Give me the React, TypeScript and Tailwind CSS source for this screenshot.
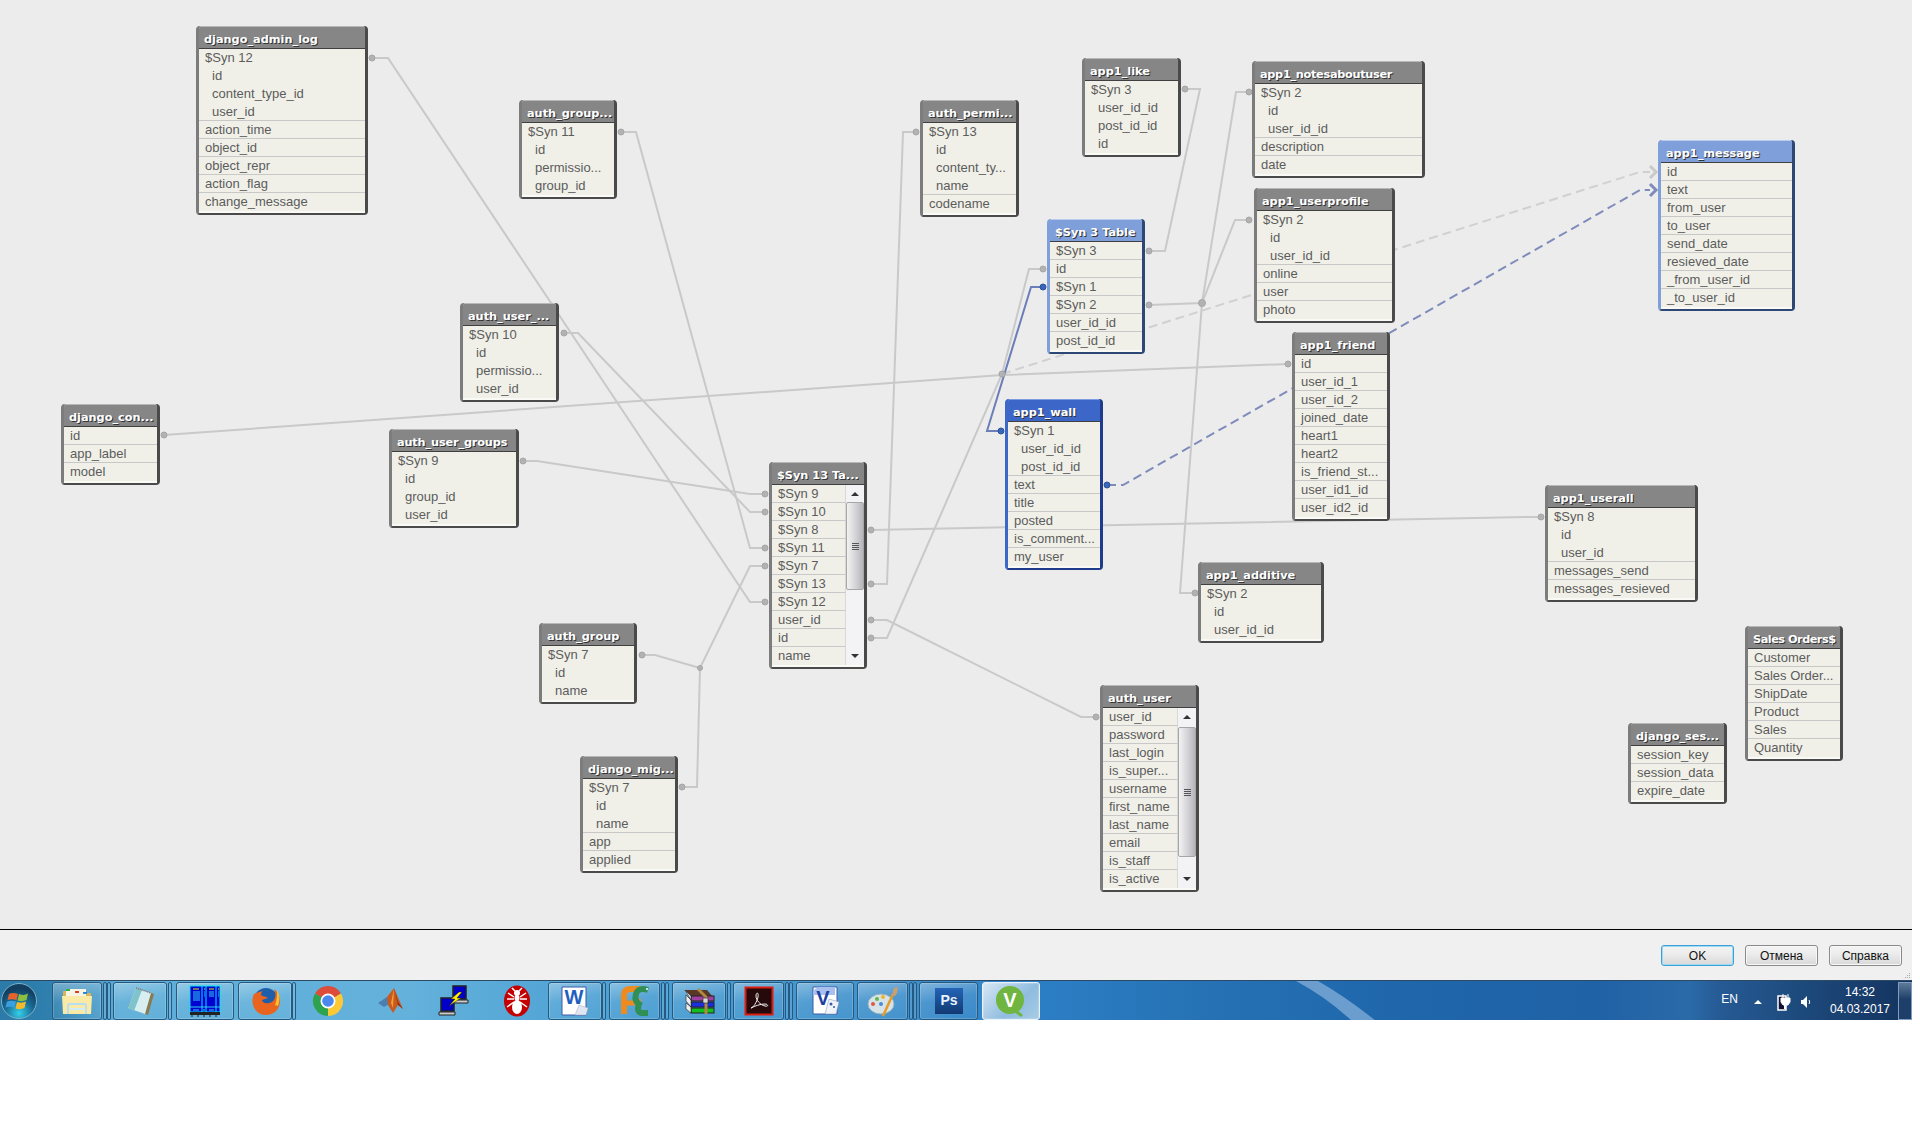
import React from "react";

type Tone = "gray" | "blue" | "light";

type TableData = {
  name: string;
  x: string;
  w: string;
  rows: string[];
  scroll?: string;
  tone?: Tone;
  head?: string;
};

// indented rows start with two spaces
const tables: TableData[] = [
  { name: "django_admin_log", x: "left-[196px] top-[26px]", w: "w-[172px]", rows: ["$Syn 12", "  id", "  content_type_id", "  user_id", "action_time", "object_id", "object_repr", "action_flag", "change_message"] },
  { name: "auth_group...", x: "left-[519px] top-[100px]", w: "w-[98px]", rows: ["$Syn 11", "  id", "  permissio...", "  group_id"] },
  { name: "auth_user_...", x: "left-[460px] top-[303px]", w: "w-[99px]", rows: ["$Syn 10", "  id", "  permissio...", "  user_id"] },
  { name: "django_con...", x: "left-[61px] top-[404px]", w: "w-[99px]", rows: ["id", "app_label", "model"] },
  { name: "auth_user_groups", x: "left-[389px] top-[429px]", w: "w-[130px]", head: "tracking-[-0.15px]", rows: ["$Syn 9", "  id", "  group_id", "  user_id"] },
  { name: "$Syn 13 Ta...", x: "left-[769px] top-[462px]", w: "w-[98px]", scroll: "mt-[-1px] h-[88px]", rows: ["$Syn 9", "$Syn 10", "$Syn 8", "$Syn 11", "$Syn 7", "$Syn 13", "$Syn 12", "user_id", "id", "name"] },
  { name: "auth_group", x: "left-[539px] top-[623px]", w: "w-[98px]", rows: ["$Syn 7", "  id", "  name"] },
  { name: "django_mig...", x: "left-[580px] top-[756px]", w: "w-[98px]", rows: ["$Syn 7", "  id", "  name", "app", "applied"] },
  { name: "auth_permi...", x: "left-[920px] top-[100px]", w: "w-[99px]", rows: ["$Syn 13", "  id", "  content_ty...", "  name", "codename"] },
  { name: "app1_like", x: "left-[1082px] top-[58px]", w: "w-[99px]", rows: ["$Syn 3", "  user_id_id", "  post_id_id", "  id"] },
  { name: "app1_notesaboutuser", x: "left-[1252px] top-[61px]", w: "w-[173px]", head: "tracking-[-0.3px]", rows: ["$Syn 2", "  id", "  user_id_id", "description", "date"] },
  { name: "$Syn 3 Table", x: "left-[1047px] top-[219px]", w: "w-[98px]", tone: "light", rows: ["$Syn 3", "id", "$Syn 1", "$Syn 2", "user_id_id", "post_id_id"] },
  { name: "app1_userprofile", x: "left-[1254px] top-[188px]", w: "w-[141px]", rows: ["$Syn 2", "  id", "  user_id_id", "online", "user", "photo"] },
  { name: "app1_message", x: "left-[1658px] top-[140px]", w: "w-[137px]", tone: "light", rows: ["id", "text", "from_user", "to_user", "send_date", "resieved_date", "_from_user_id", "_to_user_id"] },
  { name: "app1_friend", x: "left-[1292px] top-[332px]", w: "w-[98px]", rows: ["id", "user_id_1", "user_id_2", "joined_date", "heart1", "heart2", "is_friend_st...", "user_id1_id", "user_id2_id"] },
  { name: "app1_wall", x: "left-[1005px] top-[399px]", w: "w-[98px]", tone: "blue", rows: ["$Syn 1", "  user_id_id", "  post_id_id", "text", "title", "posted", "is_comment...", "my_user"] },
  { name: "app1_additive", x: "left-[1198px] top-[562px]", w: "w-[126px]", rows: ["$Syn 2", "  id", "  user_id_id"] },
  { name: "app1_userall", x: "left-[1545px] top-[485px]", w: "w-[153px]", rows: ["$Syn 8", "  id", "  user_id", "messages_send", "messages_resieved"] },
  { name: "auth_user", x: "left-[1100px] top-[685px]", w: "w-[99px]", scroll: "mt-[1px] h-[130px]", rows: ["user_id", "password", "last_login", "is_super...", "username", "first_name", "last_name", "email", "is_staff", "is_active"] },
  { name: "Sales Orders$", x: "left-[1745px] top-[626px]", w: "w-[98px]", head: "tracking-[-0.5px]", rows: ["Customer", "Sales Order...", "ShipDate", "Product", "Sales", "Quantity"] },
  { name: "django_ses...", x: "left-[1628px] top-[723px]", w: "w-[99px]", rows: ["session_key", "session_data", "expire_date"] },
];

const toneClass: Record<Tone, string> = {
  gray: "bg-[#868686] border-l-[#7c7c7c] border-r-[#4a4a4a] border-b-[#4a4a4a] shadow-[inset_0_1px_0_#b8b8b8]",
  blue: "bg-[#3d66c9] border-l-[#3d66c9] border-r-[#1f3c8c] border-b-[#1f3c8c] shadow-[inset_0_1px_0_#7d9be0]",
  light: "bg-[#7f9fda] border-l-[#7f9fda] border-r-[#2e4876] border-b-[#2e4876] shadow-[inset_0_1px_0_#b9cbee]",
};

const Scrollbar = ({ thumb }: { thumb: string }) => (
  <div className="flex w-[18px] shrink-0 flex-col items-center bg-[#f3f3f5]">
    <div className="flex h-[18px] w-full shrink-0 items-center justify-center">
      <div className="h-0 w-0 border-x-[4px] border-b-[4px] border-x-transparent border-b-[#333]" />
    </div>
    <div className={`flex w-full shrink-0 flex-col items-center justify-center gap-[1px] rounded-[2px] border border-[#a6a6a6] bg-[linear-gradient(90deg,#f2f2f2,#d6d6da_50%,#b6b6ba)] ${thumb}`}>
      <div className="h-px w-[7px] bg-[#555]" />
      <div className="h-px w-[7px] bg-[#555]" />
      <div className="h-px w-[7px] bg-[#555]" />
      <div className="h-px w-[7px] bg-[#555]" />
    </div>
    <div className="flex-1" />
    <div className="flex h-[18px] w-full shrink-0 items-center justify-center">
      <div className="h-0 w-0 border-x-[4px] border-t-[4px] border-x-transparent border-t-[#333]" />
    </div>
  </div>
);

const Table = ({ t }: { t: TableData }) => (
  <div className={`absolute ${t.x} ${t.w} rounded-[4px] border-x-[3px] border-b-[2px] ${toneClass[t.tone ?? "gray"]}`}>
    <div className={`flex h-[22px] items-end whitespace-nowrap pl-[5px] font-['DejaVu_Sans'] text-[11.3px] font-bold leading-[16px] text-white [text-shadow:1px_1px_0_#333] ${t.head ?? ""}`}>
      {t.name}
    </div>
    <div className="flex border-t border-[#3f3f3f]">
      <div className="min-w-0 flex-1">
        {t.rows.map((r, i) => {
          const next = t.rows[i + 1];
          const line = next !== undefined && !next.startsWith("  ");
          return (
            <div
              key={i}
              className={`box-border h-[18px] overflow-hidden whitespace-nowrap bg-[#f0f0e8] font-['Liberation_Sans'] text-[13px] leading-[17px] text-[#5c5c5c] ${r.startsWith("  ") ? "pl-[13px]" : "pl-[6px]"} ${line ? "border-b border-[#c8c8c8]" : ""} ${t.scroll ? "border-r border-r-[#d8d8d8]" : ""}`}
            >
              {r.trim()}
            </div>
          );
        })}
      </div>
      {t.scroll && <Scrollbar thumb={t.scroll} />}
    </div>
    <div className="h-[2px] bg-[#f9f9f5]" />
  </div>
);

const Links = () => (
  <svg className="absolute left-0 top-0" width="1912" height="929" fill="none">
    <g stroke="#c9c9c9" strokeWidth="2">
      <path d="M372 58H388L750 602H765" />
      <path d="M621 132H636L750 548H765" />
      <path d="M564 333H578L750 512H765" />
      <path d="M523 461H537L750 494H765" />
      <path d="M642 655H655L700 668L750 566H765" />
      <path d="M682 787H697L700 668" />
      <path d="M164 435L1002 375L1288 364" />
      <path d="M871 638H887L1002 374L1029 269H1043" />
      <path d="M871 584H887L903 132H916" />
      <path d="M871 530L1526 517L1541 517" />
      <path d="M871 620H887L1081 717H1096" />
      <path d="M1149 251H1165L1200 89H1185" />
      <path d="M1149 305L1202 303L1236 92H1249" />
      <path d="M1202 303L1235 220H1249" />
      <path d="M1202 303L1180 593H1195" />
      <path d="M1002 374L1640 172H1650" strokeDasharray="9 5" stroke="#d0d0d0" />
      <path d="M1650 166L1656 172L1650 178" strokeWidth="3" />
    </g>
    <g stroke="#7f8cbb" strokeWidth="2">
      <path d="M1043 287H1031L987 431H1001" stroke="#6b7eb8" />
      <path d="M1107 485H1123L1640 190H1650" strokeDasharray="9 5" />
      <path d="M1650 184L1656 190L1650 196" strokeWidth="3" />
    </g>
    <g fill="#b2b2b2" stroke="#a6a6a6">
      {[
        [372, 58], [621, 132], [564, 333], [523, 461], [642, 655], [682, 787], [164, 435], [1288, 364],
        [765, 494], [765, 512], [765, 548], [765, 566], [765, 602], [871, 530], [871, 584], [871, 620], [871, 638],
        [916, 132], [1185, 89], [1249, 92], [1249, 220], [1043, 269], [1149, 251], [1149, 305], [1195, 593], [1541, 517], [1096, 717],
      ].map(([cx, cy]) => (
        <circle key={`${cx}-${cy}`} cx={cx} cy={cy} r="3" />
      ))}
      <circle cx="700" cy="668" r="2.5" />
      <circle cx="1002" cy="374" r="3" />
      <circle cx="1202" cy="303" r="3.5" />
    </g>
    <g fill="#3a66b8" stroke="#2d529c">
      <circle cx="1043" cy="287" r="3" />
      <circle cx="1001" cy="431" r="3" />
      <circle cx="1107" cy="485" r="3" />
    </g>
  </svg>
);

const Orb = () => (
  <svg width="36" height="36" viewBox="0 0 36 36">
    <defs>
      <radialGradient id="orb" cx="50%" cy="85%" r="70%">
        <stop offset="0%" stopColor="#35d0ea" />
        <stop offset="55%" stopColor="#1a6c96" />
        <stop offset="100%" stopColor="#123f60" />
      </radialGradient>
    </defs>
    <circle cx="18" cy="18" r="17.5" fill="url(#orb)" stroke="#7fb2cc" />
    <path d="M8 11q4-2 9 0l-1.500 6q-5-1.500-9 0z" fill="#e8622c" />
    <path d="M18 11q5 2 9-.5l-1.500 6.500q-4 2-9 .5z" fill="#8cc13f" />
    <path d="M6 18.500q4-1.500 9 0l-1.500 6q-5-1.500-9 0z" fill="#3b9ede" />
    <path d="M16 19q5 1.500 9-.5l-1.500 6.500q-4 2-9 .5z" fill="#f3bb2c" />
  </svg>
);

const icons: Record<string, React.ReactNode> = {
  folder: (
    <>
      <path d="M2 6h9l2 2h17v20H2z" fill="#d9b65c" />
      <rect x="5" y="4" width="20" height="8" fill="#f8f4e4" />
      <rect x="5" y="4" width="4" height="2" fill="#32b04a" />
      <rect x="14" y="6" width="4" height="2" fill="#d64030" />
      <rect x="22" y="7" width="4" height="2" fill="#2a8ad8" />
      <path d="M1 11h30l-1 18H2z" fill="#fbe9a6" />
      <path d="M7 29v-8q0-2 2-2h14q2 0 2 2v8" fill="none" stroke="#b8def2" strokeWidth="2" />
      <path d="M9 24h14" stroke="#d0ecf8" strokeWidth="2" />
    </>
  ),
  notepad: (
    <>
      <path d="M4 22L13 3l17 6-6 21z" fill="#8a7a50" />
      <path d="M4 23L12 3l15 5-6 21z" fill="#d8eef0" />
      <path d="M4 23L12 3l6 2-8 21z" fill="#7fc4cc" />
      <path d="M12 3l15 5" stroke="#777" strokeWidth="1.500" strokeDasharray="1 1" />
    </>
  ),
  grid: (
    <>
      <rect x="1" y="1" width="30" height="26" fill="#0000d0" stroke="#00e8f0" />
      <path d="M13 1v26M17 1v26M27 1v26" stroke="#00e8f0" />
      <path d="M4 4h6M20 4h5M15 4h1M29 4h1" stroke="#f0e000" />
      <path d="M4 7h7M4 9h7M4 11h7M4 13h7M4 15h7M20 7h5M20 9h5M20 11h5M15 7h1M15 9h1M15 11h1M29 7h1M29 9h1M29 11h1" stroke="#30d0f0" />
      <path d="M1 22h30M4 25h6M14 25h2M20 25h5" stroke="#30d0f0" />
      <rect x="1" y="27" width="30" height="3" fill="#222" />
      <path d="M3 30v2M9 30v2M15 30v2M21 30v2M27 30v2" stroke="#222" />
    </>
  ),
  firefox: (
    <>
      <circle cx="17" cy="15" r="12" fill="#1f5ea8" />
      <path d="M5 9c-4 8 0 21 12 21 9 0 14-7 14-14 0-5-3-10-6-12 3 6 1 13-5 14-4 1-7-1-7-3l6-2c-2-2-5-1-7-3l1-4c-3 1-6 2-8 3z" fill="#e8641f" />
      <path d="M28 5c3 5 3 11 1 16l-3-1c2-5 2-10 2-15z" fill="#f8c030" />
    </>
  ),
  chrome: (
    <>
      <path d="M16 16L3 8.500A15 15 0 0 1 29 8.500Z" fill="#dd4b39" />
      <path d="M16 16L3 8.500A15 15 0 0 0 16 31Z" fill="#2ea34f" />
      <path d="M16 16L29 8.500A15 15 0 0 1 16 31Z" fill="#fcc934" />
      <circle cx="16" cy="16" r="7.500" fill="#fff" />
      <circle cx="16" cy="16" r="5.800" fill="#4a87ee" />
    </>
  ),
  matlab: (
    <>
      <path d="M3 18l9-6 4 6-7 4z" fill="#4a7fb0" />
      <path d="M12 12L19 3l9 21-5-4-5 8-5-8z" fill="#c85a20" />
      <path d="M19 3l4 14 5 7-5-4z" fill="#8a2c14" />
      <path d="M16 18l3-15-1 20z" fill="#f0a030" />
    </>
  ),
  putty: (
    <>
      <rect x="15" y="1" width="13" height="13" fill="#0000c8" stroke="#222" strokeWidth="1.500" />
      <path d="M15 15h15v3H15z" fill="#ccc" stroke="#222" />
      <rect x="3" y="13" width="13" height="13" fill="#0000c8" stroke="#222" strokeWidth="1.500" />
      <path d="M1 27h16v3H1z" fill="#ccc" stroke="#222" />
      <path d="M21 7l-8 7 4 0-6 7 12-8-4 0 5-6z" fill="#fff000" stroke="#222" strokeWidth=".5" />
    </>
  ),
  ant: (
    <>
      <ellipse cx="16" cy="16" rx="13" ry="15.500" fill="#c40000" />
      <ellipse cx="16" cy="8" rx="3" ry="3" fill="#fff" />
      <ellipse cx="16" cy="13" rx="2.500" ry="3" fill="#fff" />
      <ellipse cx="16" cy="22" rx="5" ry="7" fill="#fff" />
      <path d="M13 12L7 8M19 12l6-4M13 14H6M19 14h7M13 17l-7 5M19 17l7 5M14 6l-3-3M18 6l3-3" stroke="#fff" strokeWidth="1.500" />
    </>
  ),
  word: (
    <>
      <path d="M3 2h24v28H3z" fill="#fff" stroke="#3a5aa8" />
      <path d="M20 20l9 3-2 7H16z" fill="#dfe6f2" stroke="#aab" strokeWidth=".5" />
      <text x="15" y="19" textAnchor="middle" fontFamily="Liberation Sans" fontWeight="700" fontSize="20" fill="#1f5fc0">W</text>
    </>
  ),
  pycharm: (
    <>
      <path d="M5 29V10q0-6 7-6h7q3 0 3 3" fill="none" stroke="#ef8a1f" strokeWidth="6" />
      <path d="M8 18h6q5 0 6-4" fill="none" stroke="#ef8a1f" strokeWidth="5" />
      <path d="M29 5q-10-3-12 4t3 10q-3 8 3 9h6" fill="none" stroke="#2f8f55" strokeWidth="6" />
      <circle cx="28" cy="4" r="1" fill="#fff" />
    </>
  ),
  winrar: (
    <>
      <path d="M2 5h22l6 7H8z" fill="#5a3828" />
      <rect x="8" y="11" width="23" height="5" fill="#a040a0" stroke="#222" />
      <rect x="8" y="17" width="23" height="5" fill="#1a30e0" stroke="#222" />
      <rect x="8" y="23" width="23" height="5" fill="#10c020" stroke="#222" />
      <path d="M2 5l6 6v17l-5-4v-6l5 4-5-6v-6l5 5z" fill="#eee" stroke="#222" strokeWidth=".6" />
      <path d="M15 4l8 8v17" fill="none" stroke="#b08840" strokeWidth="3" />
      <rect x="20" y="13" width="5" height="5" fill="#d8d8d8" stroke="#222" strokeWidth=".6" />
    </>
  ),
  acrobat: (
    <>
      <rect x="2.500" y="2.500" width="27" height="27" fill="#26090b" stroke="#dd1c10" strokeWidth="2" />
      <path d="M8 23c2 0 6-6 7-11 1-5-2-5-2-1s4 9 9 10c4 1 3-2 0-2-5 0-10 2-14 4z" fill="none" stroke="#eee" strokeWidth="1" />
    </>
  ),
  visio: (
    <>
      <path d="M4 2h24v27H4z" fill="#fff" stroke="#3a5aa8" />
      <path d="M4 10q0-8 8-8h14v8z" fill="#a9c0ef" />
      <path d="M20 14l10 3-3 12H16z" fill="#f0f3fa" stroke="#88a" strokeWidth=".5" />
      <circle cx="22" cy="19" r="1.500" fill="#3a5aa8" />
      <circle cx="25" cy="22" r="1" fill="#3a5aa8" />
      <text x="14" y="20" textAnchor="middle" fontFamily="Liberation Sans" fontWeight="700" fontSize="20" fill="#1e3f9f">V</text>
    </>
  ),
  paint: (
    <>
      <ellipse cx="14" cy="19" rx="13" ry="10" fill="#d6e4ea" stroke="#98b2bd" />
      <circle cx="6" cy="19" r="2" fill="#e4553f" />
      <circle cx="10" cy="14" r="2" fill="#63b84a" />
      <circle cx="16" cy="12" r="2" fill="#eab52e" />
      <circle cx="14" cy="19" r="2" fill="#4a8ed0" />
      <path d="M16 31L26 9" stroke="#e89a26" strokeWidth="2.500" />
      <path d="M25 10l2-7 4-1-1 6-2 3z" fill="#c9a06e" />
    </>
  ),
  ps: (
    <>
      <rect x="2" y="3" width="28" height="26" fill="url(#psg)" />
      <defs>
        <linearGradient id="psg" x1="0" y1="0" x2="0" y2="1">
          <stop offset="0%" stopColor="#2464b8" />
          <stop offset="100%" stopColor="#123a72" />
        </linearGradient>
      </defs>
      <text x="16" y="20" textAnchor="middle" fontFamily="Liberation Sans" fontWeight="700" fontSize="14" fill="#e8f2ff">Ps</text>
    </>
  ),
  qlik: (
    <>
      <circle cx="15" cy="15" r="14" fill="#6fb53f" />
      <path d="M22 25l6 5-2 2-7-5z" fill="#6fb53f" />
      <text x="15" y="22" textAnchor="middle" fontFamily="Liberation Sans" fontWeight="700" fontSize="20" fill="#fff">V</text>
    </>
  ),
};

const Icon = ({ name }: { name: string }) => (
  <svg width="32" height="32" viewBox="0 0 32 32">
    {icons[name]}
  </svg>
);

const TaskBtn = ({ w, icon, active }: { w: string; icon: string; active?: boolean }) => (
  <div
    className={`flex h-[38px] shrink-0 items-center justify-center rounded-[3px] border shadow-[inset_0_0_0_1px_rgba(255,255,255,0.18)] ${w} ${
      active
        ? "border-[#e8f2fa] bg-[linear-gradient(135deg,#d8e8f4,#8fbcdf_60%,#a8cce6)]"
        : "border-[#25597f] bg-[linear-gradient(170deg,rgba(255,255,255,0.35),rgba(255,255,255,0.08)_45%,rgba(255,255,255,0.02))]"
    }`}
  >
    <Icon name={icon} />
  </div>
);

const Notch = () => (
  <div className="h-[38px] w-[4px] shrink-0 rounded-[2px] border border-[#25597f] bg-white/10" />
);

const Pin = ({ icon }: { icon: string }) => (
  <div className="flex h-[38px] w-[63px] shrink-0 items-center justify-center">
    <Icon name={icon} />
  </div>
);

const Taskbar = () => (
  <div className="relative flex h-[40px] items-center overflow-hidden border-t border-[#2a4a66] bg-[linear-gradient(90deg,#2b7aa8_0,#2f80ae_50px,#5dadd8_120px,#64b2dc_400px,#4a9ed2_640px,#4191cc_900px,#2c7ec4_1040px,#2672b5_1200px,#1f66ab_1400px,#2062a6_1600px,#2a6aa8_1690px,#265a94_1720px,#1d4a7c_1800px,#14335f_1912px)]">
    <div className="absolute left-[1296px] top-0">
      <svg width="90" height="40" viewBox="0 0 90 40">
        <path d="M0 0H22Q50 16 80 40H56Q30 16 0 0Z" fill="#9cc0e4" fillOpacity="0.6" />
      </svg>
    </div>
    <div className="flex w-[52px] shrink-0 justify-start pl-px">
      <Orb />
    </div>
    <TaskBtn w="w-[50px]" icon="folder" />
    <div className="ml-px flex">
      <Notch />
      <Notch />
    </div>
    <TaskBtn w="ml-[2px] w-[54px]" icon="notepad" />
    <div className="ml-px">
      <Notch />
    </div>
    <TaskBtn w="ml-[4px] w-[58px]" icon="grid" />
    <TaskBtn w="ml-[4px] w-[54px]" icon="firefox" />
    <Notch />
    <Pin icon="chrome" />
    <Pin icon="matlab" />
    <Pin icon="putty" />
    <Pin icon="ant" />
    <TaskBtn w="w-[54px]" icon="word" />
    <Notch />
    <TaskBtn w="ml-[3px] w-[51px]" icon="pycharm" />
    <div className="ml-px flex">
      <Notch />
      <Notch />
    </div>
    <TaskBtn w="ml-[3px] w-[54px]" icon="winrar" />
    <div className="ml-px">
      <Notch />
    </div>
    <TaskBtn w="ml-[2px] w-[51px]" icon="acrobat" />
    <div className="ml-px flex">
      <Notch />
      <Notch />
    </div>
    <TaskBtn w="ml-[3px] w-[58px]" icon="visio" />
    <TaskBtn w="ml-[3px] w-[51px]" icon="paint" />
    <div className="ml-px flex">
      <Notch />
      <Notch />
    </div>
    <TaskBtn w="ml-[2px] w-[59px]" icon="ps" />
    <TaskBtn w="ml-[4px] w-[58px]" icon="qlik" active />

    <div className="ml-auto flex h-full items-center font-['Liberation_Sans'] text-white">
      <span className="mb-[4px] text-[12px]">EN</span>
      <div className="ml-[16px] mt-[2px] h-0 w-0 border-x-[4px] border-b-[4px] border-x-transparent border-b-white" />
      <svg className="ml-[14px] mt-[2px]" width="16" height="18" viewBox="0 0 16 18">
        <path d="M2 3h8v14H2z" fill="#113" stroke="#fff" strokeWidth="1.500" />
        <path d="M7 1v4M12 1v4M5 5h9v4l-2 3H7L5 9z" fill="#fff" stroke="#fff" />
        <path d="M9 12v4" stroke="#fff" strokeWidth="2" />
      </svg>
      <svg className="ml-[8px] mt-[2px]" width="12" height="14" viewBox="0 0 12 14">
        <path d="M1 5h2l4-4v12l-4-4H1z" fill="#fff" />
        <path d="M9 5q1.500 2 0 4" stroke="#fff" fill="none" />
      </svg>
      <div className="ml-[16px] flex w-[64px] flex-col items-center text-[12px] leading-[17px]">
        <span>14:32</span>
        <span>04.03.2017</span>
      </div>
      <div className="ml-[6px] h-[38px] w-[14px] border border-[#7f9cbc] bg-[linear-gradient(180deg,#5d7a98,#1d3f6a_45%,#1d3f6a)]" />
    </div>
  </div>
);

const DlgBtn = ({ label, primary }: { label: string; primary?: boolean }) => (
  <div
    className={`flex h-[21px] w-[73px] items-center justify-center rounded-[3px] border bg-[linear-gradient(180deg,#f4f4f4,#ebebeb_45%,#d8d8d8)] font-['Liberation_Sans'] text-[12px] text-[#111] ${
      primary ? "border-[#3c9fd8] shadow-[inset_0_0_0_1px_#9fdcf4]" : "border-[#8a8a8a] shadow-[inset_0_0_0_1px_#f8f8f8]"
    }`}
  >
    {label}
  </div>
);

export default function App() {
  return (
    <div className="h-[1132px] w-[1920px] overflow-hidden bg-white">
      <div className="w-[1912px]">
        <div className="relative h-[929px] bg-[#ececec]">
          <Links />
          {tables.map((t) => (
            <Table key={t.name} t={t} />
          ))}
        </div>
        <div className="relative h-[51px] border-t border-black bg-[#f0f0f0]">
          <div className="flex justify-end gap-[11px] pr-[10px] pt-[15px]">
            <DlgBtn label="OK" primary />
            <DlgBtn label="Отмена" />
            <DlgBtn label="Справка" />
          </div>
          <div className="absolute bottom-[2px] right-[2px] grid grid-cols-3 gap-[1px]">
            <span />
            <span />
            <span className="h-px w-px bg-[#aaa]" />
            <span />
            <span className="h-px w-px bg-[#aaa]" />
            <span className="h-px w-px bg-[#aaa]" />
            <span className="h-px w-px bg-[#aaa]" />
            <span className="h-px w-px bg-[#aaa]" />
            <span className="h-px w-px bg-[#aaa]" />
          </div>
        </div>
        <Taskbar />
      </div>
    </div>
  );
}
